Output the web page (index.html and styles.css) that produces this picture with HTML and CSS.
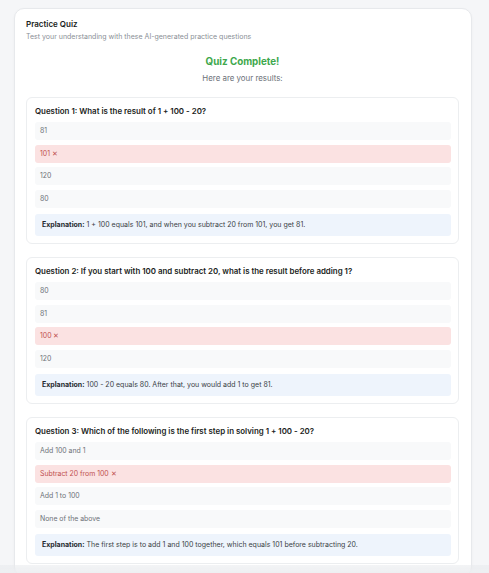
FILE: index.html
```html
<!DOCTYPE html>
<html lang="en">
<head>
<meta charset="utf-8">
<title>Practice Quiz</title>
<link rel="stylesheet" href="styles.css">
</head>
<body>
<div class="panel">
  <header class="panel-head">
    <h1 class="panel-title">Practice Quiz</h1>
    <p class="panel-sub">Test your understanding with these AI-generated practice questions</p>
  </header>
  <div class="result-head">
    <h2 class="result-title">Quiz Complete!</h2>
    <p class="result-sub">Here are your results:</p>
  </div>
  <div class="questions">
    <section class="q-card">
      <h3 class="q-title">Question 1: What is the result of 1 + 100 - 20?</h3>
      <div class="options">
        <div class="option">81</div>
        <div class="option wrong">101 ✕</div>
        <div class="option">120</div>
        <div class="option">80</div>
      </div>
      <div class="explain"><strong>Explanation:</strong> 1 + 100 equals 101, and when you subtract 20 from 101, you get 81.</div>
    </section>
    <section class="q-card">
      <h3 class="q-title">Question 2: If you start with 100 and subtract 20, what is the result before adding 1?</h3>
      <div class="options">
        <div class="option">80</div>
        <div class="option">81</div>
        <div class="option wrong">100 ✕</div>
        <div class="option">120</div>
      </div>
      <div class="explain"><strong>Explanation:</strong> 100 - 20 equals 80. After that, you would add 1 to get 81.</div>
    </section>
    <section class="q-card">
      <h3 class="q-title">Question 3: Which of the following is the first step in solving 1 + 100 - 20?</h3>
      <div class="options">
        <div class="option">Add 100 and 1</div>
        <div class="option wrong">Subtract 20 from 100 ✕</div>
        <div class="option">Add 1 to 100</div>
        <div class="option">None of the above</div>
      </div>
      <div class="explain"><strong>Explanation:</strong> The first step is to add 1 and 100 together, which equals 101 before subtracting 20.</div>
    </section>
  </div>
</div>
<div class="bottom-fade"></div>
</body>
</html>
```

FILE: styles.css
```css
* { box-sizing: border-box; }

html, body {
  margin: 0;
  padding: 0;
}

body {
  background: #f5f6f8;
  font-family: Inter, "Noto Sans", "Liberation Sans", sans-serif;
  color: #1f2328;
  padding: 8px 17px 0 14px;
  overflow: hidden;
}

.panel {
  width: 458px;
  background: #ffffff;
  border: 1px solid #e7e9ec;
  border-radius: 10px;
  box-shadow: 0 1px 3px rgba(0, 0, 0, 0.04);
  padding: 10px 12px 12px 11px;
}

.panel-title {
  margin: 0;
  font-size: 8px;
  line-height: 11px;
  font-weight: 600;
  color: #1a1d21;
}

.panel-sub {
  margin: 2px 0 0;
  font-size: 7px;
  line-height: 10px;
  color: #8a8f96;
}

.result-head {
  text-align: center;
  margin-top: 13px;
}

.result-title {
  margin: 0;
  font-size: 9.8px;
  line-height: 13px;
  font-weight: 700;
  color: #3ea84d;
}

.result-sub {
  margin: 5px 0 0;
  font-size: 7.9px;
  line-height: 10px;
  color: #6b7078;
}

.questions {
  display: flex;
  flex-direction: column;
  gap: 13px;
  margin-top: 14px;
}

.q-card {
  border: 1px solid #eceef0;
  border-radius: 6px;
  padding: 8px 7px 7px 8px;
  height: 147px;
}

.q-title {
  margin: 0;
  font-size: 7.9px;
  line-height: 11px;
  font-weight: 600;
  color: #1a1d21;
}

.options {
  display: flex;
  flex-direction: column;
  gap: 4.67px;
  margin-top: 5px;
}

.option {
  height: 18px;
  line-height: 18px;
  padding: 0 5px;
  font-size: 6.9px;
  color: #6d7178;
  background: #f8f9fa;
  border-radius: 3px;
}

.option.wrong {
  background: #fbe2e2;
  color: #c0504f;
}

.explain {
  margin-top: 6px;
  height: 22px;
  line-height: 22px;
  padding: 0 7px;
  font-size: 7px;
  color: #3a3f45;
  background: #eef4fc;
  border-radius: 3px;
}

.explain strong {
  font-weight: 700;
  color: #25292e;
}

.bottom-fade {
  position: fixed;
  left: 0;
  right: 0;
  bottom: 0;
  height: 8px;
  background: linear-gradient(to bottom, rgba(230, 232, 235, 0.5), rgba(236, 238, 241, 0.9));
}
```
